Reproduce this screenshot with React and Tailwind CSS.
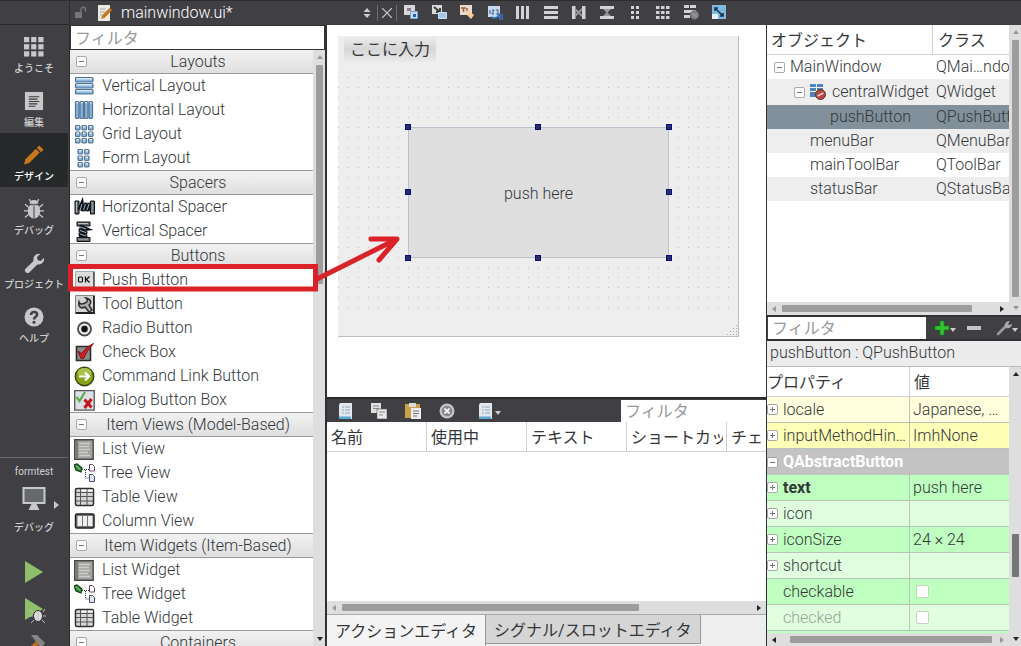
import { useState } from "react";
import clsx from "clsx";

/* ---------- small shared parts ---------- */

function Expander({ open = true, label }) {
  return (
    <button aria-label={label} className="block size-[11px] shrink-0 rounded-[2px] border border-[#a9a9a9] bg-white">
      <svg viewBox="0 0 9 9" className="block size-[9px]" stroke="#777" strokeWidth="1">
        <path d="M2 4.5h5" />
        {!open && <path d="M4.5 2v5" />}
      </svg>
    </button>
  );
}

function Triangle({ dir, dark }) {
  const points = {
    up: "1,6 4,2 7,6",
    down: "1,2 7,2 4,6",
    left: "6,1 2,4 6,7",
    right: "2,1 6,4 2,7",
  };
  return (
    <svg viewBox="0 0 8 8" className="size-2 shrink-0" fill={dark ? "#222" : "#999"}>
      <polygon points={points[dir]} />
    </svg>
  );
}

function ScrollY({ before, thumb, after, dark, upDark, downDark }) {
  return (
    <div className="flex w-3 shrink-0 flex-col items-center bg-[#dedede] py-[3px] pl-px">
      <Triangle dir="up" dark={upDark} />
      <div className="my-1 flex min-h-0 w-[7px] flex-1 flex-col">
        <div style={{ flexGrow: before }} />
        <div style={{ flexGrow: thumb }} className={dark ? "rounded-[1px] bg-[#767676]" : "rounded-[1px] bg-[#9d9d9d]"} />
        <div style={{ flexGrow: after }} />
      </div>
      <Triangle dir="down" dark={downDark} />
    </div>
  );
}

function ScrollX({ before = 0, thumb, after, leftDark, rightDark = true }) {
  return (
    <div className="flex h-[13px] shrink-0 items-center bg-[#dedede] px-[3px]">
      <Triangle dir="left" dark={leftDark} />
      <div className="mx-1 flex h-[7px] flex-1">
        <div style={{ flexGrow: before }} />
        <div style={{ flexGrow: thumb }} className="rounded-[1px] bg-[#9d9d9d]" />
        <div style={{ flexGrow: after }} />
      </div>
      <Triangle dir="right" dark={rightDark} />
    </div>
  );
}

/* ---------- widget box icons, all on a 21 x 21 grid ---------- */

function Tile({ x, y, w, h }) {
  return (
    <>
      <rect x={x + 0.5} y={y + 0.5} width={w} height={h} rx="1" fill="#86b4dc" stroke="#55728f" strokeWidth="1.2" />
      <path d={`M${x + 1.5} ${y + 1.8}h${w - 2}`} stroke="#dcf0fd" strokeWidth="1.4" />
    </>
  );
}

const widgetIcons = {
  vlayout: [1, 7, 13].map((y) => <Tile key={y} x={1} y={y} w={17.5} h={4.5} />),
  hlayout: [1, 5.5, 10, 14.5].map((x) => <Tile key={x} x={x} y={1} w={3.5} h={17} />),
  grid: [1, 7.5, 14].map((x) => [1, 7.5, 14].map((y) => <Tile key={x + "-" + y} x={x} y={y} w={4.5} h={4.5} />)),
  form: [3.5, 10].map((x) => [1, 7.5, 14].map((y) => <Tile key={x + "-" + y} x={x} y={y} w={4.5} h={4.5} />)),
  hspacer: (
    <>
      <path d="M1 4h4v13H1zM16.500 4h4v13h-4z" fill="#5f6a70" stroke="#111" />
      <path d="M5 13l3-7 1 8 3-8 1 8 3-8v8" fill="none" stroke="#12161d" strokeWidth="3.400" />
      <path d="M6 13l2-6M9.500 13l2-6M13 13l2-6" stroke="#9fb0c0" strokeWidth="1" />
      <path d="M2.500 5v10M18 5v10" stroke="#b5bfc4" />
    </>
  ),
  vspacer: (
    <>
      <path d="M3 1h13v4H3zM3 16.500h13v4H3z" fill="#5f6a70" stroke="#111" />
      <path d="M6 5l7 3-8 1 8 3-8 1 8 3H5" fill="none" stroke="#12161d" strokeWidth="3.400" />
      <path d="M6 6l6 2M6 9.500l6 2M6 13l6 2" stroke="#9fb0c0" strokeWidth="1" />
      <path d="M4 2.500h10M4 18h10" stroke="#b5bfc4" />
    </>
  ),
  push: (
    <>
      <path d="M1.5 1.5h18v16h-18z" fill="#dcdcdc" stroke="#aaa" />
      <path d="M1.5 18h18.500V1.500" fill="none" stroke="#444" strokeWidth="1.500" />
      <rect x="4.500" y="7" width="4" height="5" fill="none" stroke="#111" strokeWidth="1.200" rx="1" />
      <path d="M11.500 6.500v6M15.500 6.500l-3 3 3 3" fill="none" stroke="#111" strokeWidth="1.300" />
    </>
  ),
  tool: (
    <>
      <path d="M1.5 1.5h18v17h-18z" fill="#d3d3d3" stroke="#888" />
      <path d="M1.5 19h18.500V1.500" fill="none" stroke="#222" strokeWidth="1.800" />
      <path d="M5 8c1 3 4 2 6 1 3-1 3-3 1-5 5 1 6 5 3 7l3 5-3 2-4-5c-4 2-7 0-6-5z" fill="#aaa" stroke="#2c2c2c" strokeWidth="1.500" />
    </>
  ),
  radio: (
    <>
      <circle cx="10.500" cy="11" r="6.500" fill="#d0d0d0" stroke="#4c4c4c" strokeWidth="1.800" />
      <circle cx="10.500" cy="11" r="4.700" fill="none" stroke="#fff" />
      <circle cx="10.500" cy="11" r="3.200" fill="#111" />
    </>
  ),
  check: (
    <>
      <path d="M2.500 4.500h14v14h-14z" fill="#8b8b8b" stroke="#2c2c2c" strokeWidth="1.600" />
      <path d="M4 9l3.500 2.500Q13 4 19.500 1.500 13 8 9.500 16.500H7z" fill="#cf1f28" stroke="#7d1015" />
    </>
  ),
  command: (
    <>
      <circle cx="10.500" cy="10.500" r="9.200" fill="#86a31a" stroke="#39470d" strokeWidth="1.500" />
      <ellipse cx="10.500" cy="6.500" rx="7" ry="4.500" fill="#abc04a" />
      <path d="M5 10.500h10M11 6.500l4 4-4 4" fill="none" stroke="#fff" strokeWidth="2.200" />
    </>
  ),
  dialog: (
    <>
      <path d="M.7.7h19.500v19.500H.7z" fill="#dbdfe6" stroke="#555" strokeWidth="1.300" />
      <path d="M2.500 7l3 4L11 2" fill="none" stroke="#5faa48" strokeWidth="2.200" />
      <path d="M10.500 9.500l7 8M17.500 9l-7 9" stroke="#c0181c" strokeWidth="3" />
    </>
  ),
  list: (
    <>
      <path d="M.7.7h18.500v19.500H.7z" fill="#a2a39f" stroke="#484848" strokeWidth="1.400" />
      <path d="M3 1.500v18" stroke="#6c6c6c" strokeWidth="1.500" />
      <path d="M5 4.500h11M5 7.500h10M5 10.500h11M5 13.500h9M5 16.500h11" stroke="#cdcec9" strokeWidth="1.300" />
    </>
  ),
  tree: (
    <>
      <path d="M0 2l3-1 5 4-1 4-5-2z" fill="#2c8b3a" stroke="#123f19" strokeWidth="1.200" />
      <path d="M2 2.500l4 4" stroke="#a7e0ae" />
      <path d="M8 6.500h7M11.500 7v8h4" fill="none" stroke="#333" strokeDasharray="1 1" />
      <path d="M15.500 1.500h3l2 2v4.500h-5z" fill="#fff" stroke="#6c4a6e" />
      <path d="M15.500 11.500h3l2 2v5h-5z" fill="#dde6f5" stroke="#4a4f6e" />
    </>
  ),
  table: (
    <>
      <rect x="1.500" y="1.500" width="18" height="17" rx="1.500" fill="#d6d6d6" stroke="#2e2e2e" strokeWidth="1.500" />
      <path d="M2 5.500h17M2 9.500h17M2 14h17M6.500 2v16M13 2v16" stroke="#555" />
      <path d="M7.500 3.500h5M14 3.500h5" stroke="#fff" strokeWidth="1.500" />
    </>
  ),
  column: (
    <>
      <rect x="1.500" y="3" width="18.500" height="14" rx="1.500" fill="#777" stroke="#222" strokeWidth="1.500" />
      <path d="M3.500 5H8v10H3.500zM9 5h4v10H9zM14 5h4.500v10H14z" fill="#f0f0f0" />
    </>
  ),
};

const widgetGroups = [
  {
    title: "Layouts",
    items: [["Vertical Layout", "vlayout"], ["Horizontal Layout", "hlayout"], ["Grid Layout", "grid"], ["Form Layout", "form"]],
  },
  { title: "Spacers", items: [["Horizontal Spacer", "hspacer"], ["Vertical Spacer", "vspacer"]] },
  {
    title: "Buttons",
    items: [
      ["Push Button", "push"],
      ["Tool Button", "tool"],
      ["Radio Button", "radio"],
      ["Check Box", "check"],
      ["Command Link Button", "command"],
      ["Dialog Button Box", "dialog"],
    ],
  },
  {
    title: "Item Views (Model-Based)",
    items: [["List View", "list"], ["Tree View", "tree"], ["Table View", "table"], ["Column View", "column"]],
  },
  {
    title: "Item Widgets (Item-Based)",
    items: [["List Widget", "list"], ["Tree Widget", "tree"], ["Table Widget", "table"]],
  },
  { title: "Containers", items: [] },
];

function WidgetBox() {
  return (
    <aside className="flex w-[257px] shrink-0 flex-col border-r-2 border-[#2f3134] bg-white">
      <input
        aria-label="ウィジェットのフィルタ"
        placeholder="フィルタ"
        className="h-[25px] shrink-0 border border-[#333] px-1 pt-0.5 font-normal outline-none placeholder:text-[#999]"
      />
      <div className="flex min-h-0 flex-1">
        <div className="min-w-0 flex-1 overflow-hidden">
          {widgetGroups.map((group) => (
            <section key={group.title} className="border-t border-[#999] first:border-t-0">
              <h2 className="flex h-6 items-center border-b border-[#999] bg-linear-to-b from-[#f2f2f2] to-[#dfdfdf] pl-1.5">
                <Expander label={group.title} />
                <span className="flex-1 pr-1 text-center">{group.title}</span>
              </h2>
              <ul>
                {group.items.map(([name, icon]) => (
                  <li key={name} className="flex h-6 items-center gap-[7px] pl-1">
                    <svg viewBox="0 0 21 21" className="size-[21px] shrink-0">{widgetIcons[icon]}</svg>
                    <span>{name}</span>
                  </li>
                ))}
              </ul>
            </section>
          ))}
        </div>
        <ScrollY before={0} thumb={221} after={350} downDark />
      </div>
    </aside>
  );
}

/* ---------- mode selector on the far left ---------- */

const modeIcons = {
  welcome: [0, 7.5, 15].map((x) =>
    [0, 7.5, 15].map((y) => <rect key={x + "-" + y} x={x} y={y} width="5.500" height="5.500" />)
  ),
  edit: (
    <>
      <path d="M1 1h19v19H1z" />
      <path d="M5 6h11M5 8.500h9M5 11h11M5 13.500h9M5 16h7" stroke="#3a3a3d" strokeWidth="1.200" />
    </>
  ),
  design: (
    <>
      <path d="M0 20.500L1.500 15 12.500 4l4 4L5.500 19z" fill="#c8791c" />
      <path d="M13.500 3L16 .5 20.500 5 18 7.500z" fill="#c8791c" />
    </>
  ),
  debug: (
    <>
      <ellipse cx="10.500" cy="12.500" rx="6.500" ry="8" />
      <path d="M6 5a4.500 4 0 0 1 9 0z" />
      <path d="M7 3L5.500 0M14 3l1.500-3M5 9L1 5.500M16 9l4-3.500M5 12.500H0M16 12.500h5M5 16l-4 3.500M16 16l4 3.500" stroke="#c8c8c8" strokeWidth="1.300" />
      <path d="M5 6h11M10.500 7v13" stroke="#404044" strokeWidth="1" />
    </>
  ),
  project: <path d="M1 17l9-8.500C9 4 12.500 0 17 1l-3.500 3.500 1 3 3 1L21 5c1 4.500-3 8-7 7L5 21c-2 1-5-2-4-4z" />,
  help: (
    <>
      <circle cx="10.500" cy="10.500" r="10" />
      <path d="M7.300 8.500c0-4.500 6.500-4 6.500-.5 0 2-3.300 2.500-3.300 5" fill="none" stroke="#404044" strokeWidth="2.600" />
      <circle cx="10.500" cy="16" r="1.600" fill="#404044" />
    </>
  ),
};

const modes = [
  ["ようこそ", "welcome"],
  ["編集", "edit"],
  ["デザイン", "design"],
  ["デバッグ", "debug"],
  ["プロジェクト", "project"],
  ["ヘルプ", "help"],
];

function ModeBar() {
  const [mode, setMode] = useState("design");
  return (
    <nav className="flex w-[70px] shrink-0 flex-col overflow-hidden border-r border-[#2c2c2f] bg-[#404044] pr-px text-[10px] font-medium text-[#d0d0d0]">
      <div className="h-[25px] shrink-0 border-t border-b border-t-[#2c2c2f] border-b-[#28282a]" />
      {modes.map(([label, id]) => (
        <button
          key={id}
          onClick={() => setMode(id)}
          className={clsx("flex h-[54px] shrink-0 flex-col items-center gap-1 pt-3", mode === id && "bg-[#262a2b] text-white")}
        >
          <svg viewBox="0 0 21 21" className="size-5" fill="#c8c8c8">{modeIcons[id]}</svg>
          <span className="leading-4 whitespace-nowrap">{label}</span>
        </button>
      ))}
      <div className="flex-1" />
      <div className="flex h-[189px] shrink-0 flex-col items-center border-t border-[#6a6a6d] pt-1.5">
        <span className="leading-4 font-normal">formtest</span>
        <button className="mt-1.5 flex w-full flex-col items-center gap-2" aria-label="キットの選択: デバッグ">
          <span className="flex items-center gap-2 pl-3">
            <svg viewBox="0 0 24 26" className="h-[26px] w-6">
              <path d="M.5 1h23v17H.5z" fill="#c8c8c8" />
              <path d="M2.500 3h19v13h-19z" fill="#66696b" />
              <path d="M9.500 18h5l3 6h-11z" fill="#c8c8c8" />
            </svg>
            <svg viewBox="0 0 5 8" className="mt-3 h-2 w-[5px]" fill="#c8c8c8"><path d="M0 0l5 4-5 4z" /></svg>
          </span>
          <span className="leading-4">デバッグ</span>
        </button>
        <button aria-label="実行" className="mt-6">
          <svg viewBox="0 0 22 24" className="h-6 w-[22px]" fill="#8fbf6b"><path d="M2 1l18 11L2 23z" /></svg>
        </button>
        <button aria-label="デバッグ開始" className="mt-3">
          <svg viewBox="0 0 24 28" className="h-7 w-6">
            <path d="M3 2l18 11L3 24z" fill="#8fbf6b" />
            <ellipse cx="16" cy="20" rx="4.500" ry="5.500" fill="#ddd" stroke="#333" />
            <path d="M11 16l-3-3M21 16l2-3M11 20H7M21 20h3M12 24l-3 3M20 24l3 3M16 15v10" stroke="#bbb" />
          </svg>
        </button>
        <button aria-label="ビルド" className="mt-2.5">
          <svg viewBox="0 0 24 24" className="size-6">
            <path d="M9 1h6l8 8-4 5z" fill="#858585" />
            <path d="M14 7l3 3-12 12-3-3z" fill="#b96a21" />
          </svg>
        </button>
      </div>
    </nav>
  );
}

/* ---------- editor toolbar ---------- */

const W = "#d2d2d2";

const toolIcons = [
  ["ウィジェットを編集", <><path d="M1 0h11v10H1z" fill="#d8d8dc" /><path d="M4 3h4v3H4z" fill="#8a7c80" /><path d="M7.500 6.500h7v7h-7z" fill="#c2dcf8" stroke="#7ba3d6" /><path d="M10 9h3v3h-3z" fill="#2e62a8" /></>],
  ["シグナル/スロットを編集", <><path d="M1 0h10v9H1z" fill="#d5dad5" /><path d="M3 2l6 5M9 3v4H5" fill="none" stroke="#2f3b33" strokeWidth="1.800" /><path d="M7.500 7.500h8v6h-8z" fill="#a8c6ea" stroke="#cfe0f5" /></>],
  ["buddy を編集", <><path d="M1 0h12v10H1z" fill="#e3dcd6" /><path d="M2 3h5M4.500 3v4M8 3v3" stroke="#a85e2c" strokeWidth="1.500" /><path d="M9 5l6 5-3 4-5-5z" fill="#f7cf97" /></>],
  ["タブ順序を編集", <><path d="M1 1h12v11H1z" fill="#c9d9ee" /><path d="M3 5v4M5 5h2l-2 4h2M9 5h2v4H9" fill="none" stroke="#345b94" /><path d="M4 12c4 2 7 1 8-3M13 8v7M15.500 9v6" fill="none" stroke="#3b6fb9" strokeWidth="1.800" /></>],
  ["水平に並べる", <path d="M1 1h3v13H1zM6 1h3v13H6zM11 1h3v13h-3z" fill={W} />],
  ["垂直に並べる", <path d="M1 1h14v3H1zM1 6h14v3H1zM1 11h14v3H1z" fill={W} />],
  ["スプリッタで水平に並べる", <><path d="M1 1h3.500v13H1zM11 1h3.500v13H11z" fill={W} /><path d="M4 4l7 7M11 4l-7 7" stroke="#999" strokeWidth="1.800" /></>],
  ["スプリッタで垂直に並べる", <><path d="M1 1h14v3H1zM1 11h14v3H1z" fill={W} /><path d="M4 4h8L8.500 7.500 12 11H4l3.500-3.500z" fill="#999" /></>],
  ["フォームレイアウトで並べる", <path d="M4 1h3v3H4zM9 1h3v3H9zM4 6h3v3H4zM9 6h3v3H9zM4 11h3v3H4zM9 11h3v3H9z" fill={W} />],
  ["格子状に並べる", <path d="M1 1h3.500v3H1zM6 1h3.500v3H6zM11 1h3.500v3H11zM1 6h3.500v3H1zM6 6h3.500v3H6zM11 6h3.500v3H11zM1 11h3.500v3H1zM6 11h3.500v3H6zM11 11h3.500v3H11z" fill={W} />],
  ["レイアウトを解除", <><path d="M1 0h5v3H1zM7 0h6v3H7zM1 5h12v3H1zM1 10h6v3H1z" fill={W} /><circle cx="11.500" cy="10" r="4.200" fill="#858585" stroke="#6a6a6a" /><path d="M9.500 8l4 4" stroke="#aaa" /></>],
  ["サイズを調整", <><path d="M1 0h14v14H1z" fill="#7fb9df" /><path d="M1 9h6v5H1z" fill="#e8f2fa" /><path d="M4 3l8 8M4 6V3h3M12 8v3H9" fill="none" stroke="#16324f" strokeWidth="1.600" /></>],
];

function TopBar() {
  return (
    <header className="flex h-[25px] shrink-0 items-center border-t border-[#2c2c2f] bg-[#404044] text-[#d8d8d8]">
      <div className="flex h-full w-[307px] items-center pr-1.5 pl-1">
        <svg viewBox="0 0 14 14" className="size-[14px]">
          <path d="M1 6h7v6H1z" fill="#77777a" />
          <path d="M7 6V3.500a2 2 0 0 1 4.500 0V6" fill="none" stroke="#77777a" strokeWidth="1.400" />
        </svg>
        <svg viewBox="0 0 16 16" className="ml-2 size-4">
          <path d="M2 0h12v16H2z" fill="#ece9e2" />
          <path d="M4 4h6M4 7h6M4 10h5" stroke="#aaa" />
          <path d="M5 14l1.500-4 7-7 2.500 2-7.500 8z" fill="#c8761c" />
        </svg>
        <select aria-label="開いているドキュメント" className="ml-[9px] flex-1 appearance-none bg-transparent font-light text-white outline-none">
          <option>mainwindow.ui*</option>
        </select>
        <svg viewBox="0 0 8 12" className="h-3 w-2" fill="#ccc"><path d="M4 1l3.500 4h-7zM4 11L.5 7h7z" /></svg>
      </div>
      <button aria-label="閉じる" className="flex h-4 w-5 items-center justify-center border-x border-[#6c6c70]">
        <svg viewBox="0 0 10 10" className="size-[10px]" stroke="#ccc" strokeWidth="1.200"><path d="M0 0l10 10M10 0L0 10" /></svg>
      </button>
      <div className="flex items-center gap-3 pl-1.5">
        {toolIcons.map(([label, icon]) => (
          <button key={label} title={label} aria-label={label} className="shrink-0">
            <svg viewBox="0 0 16 16" className="block size-4">{icon}</svg>
          </button>
        ))}
      </div>
    </header>
  );
}

/* ---------- form editor ---------- */

const handles = [
  "-left-[3px] -top-[3px]",
  "left-[127px] -top-[3px]",
  "-right-[3px] -top-[3px]",
  "-left-[3px] top-[62px]",
  "-right-[3px] top-[62px]",
  "-left-[3px] -bottom-[3px]",
  "left-[127px] -bottom-[3px]",
  "-right-[3px] -bottom-[3px]",
];

function FormCanvas() {
  return (
    <div className="min-h-0 flex-1 overflow-hidden bg-white pt-[11px] pl-[11px]">
      <div className="relative flex h-[301px] w-[401px] flex-col border-r border-b border-[#bdbdbd] bg-[#eee]">
        <div className="h-[41px] pl-1.5">
          <button className="h-[26px] bg-linear-to-b from-[#eee] via-[#d6d6d6] to-[#eaeaea] px-1.5 pt-0.5 leading-6 font-normal">ここに入力</button>
        </div>
        <div className="h-[231px] bg-[conic-gradient(from_270deg_at_1px_1px,#bdbdbd_90deg,transparent_0)] bg-[size:10px_10px]" />
        <svg viewBox="0 0 12 12" className="absolute right-0 bottom-0 size-3" fill="#aaa">
          <path d="M10 1h1v1h-1zM7 4h1v1H7zM10 4h1v1h-1zM4 7h1v1H4zM7 7h1v1H7zM10 7h1v1h-1zM1 10h1v1H1zM4 10h1v1H4zM7 10h1v1H7zM10 10h1v1h-1z" />
        </svg>
        <div className="absolute top-[91px] left-[70px] h-[131px] w-[261px]">
          <button className="size-full border border-[#c0c0cc] bg-[#dfdfdf] pt-0.5">push here</button>
          {handles.map((place) => (
            <span key={place} className={clsx("absolute size-[6px] border border-[#0b0b80] bg-[#2b2f63]", place)} />
          ))}
        </div>
      </div>
    </div>
  );
}

/* ---------- action editor ---------- */

const page = (
  <>
    <path d="M3 0h12v16H2V2z" fill="#e3e8ec" />
    <path d="M5 4h2M8 4h5M5 7h2M8 7h5M5 10h2M8 10h5" stroke="#8fa3bd" strokeWidth="1.200" />
    <path d="M2 13.500h12V16H2z" fill="#58a9cf" />
  </>
);

const actionIcons = [
  ["新規", page],
  ["コピー", <><path d="M0 0h10v10H0z" fill="#e0e0e0" /><path d="M2 3h6M2 5.500h6" stroke="#888" /><path d="M6 6h10v10H6z" fill="#e8e8e8" stroke="#555" strokeWidth=".6" /><path d="M8 9h6M8 12h4" stroke="#888" /></>],
  ["貼り付け", <><path d="M0 1h15v14H0z" fill="#c9a24a" /><path d="M4 0h7v4H4z" fill="#ddd" /><path d="M6 5h10v11H6z" fill="#eee" /><path d="M8 8h6M8 10.500h6M8 13h4" stroke="#777" /></>],
  ["削除", <><circle cx="8" cy="8" r="7.500" fill="#c4c4c4" /><circle cx="8" cy="8" r="5.200" fill="#858585" /><path d="M5.500 5.500l5 5M10.500 5.500l-5 5" stroke="#eee" strokeWidth="2" /></>],
];

const actionColumns = ["名前", "使用中", "テキスト", "ショートカット", "チェック可能"];

function ActionEditor() {
  const [tab, setTab] = useState(0);
  return (
    <section className="flex h-[249px] shrink-0 flex-col bg-white">
      <div className="flex h-[25px] shrink-0 items-center border-t-2 border-[#2a2c2e] bg-[#404044]">
        <div className="flex flex-1 items-center gap-[18px] pl-2.5">
          {actionIcons.map(([label, icon]) => (
            <button key={label} aria-label={label}><svg viewBox="0 0 16 16" className="block size-4">{icon}</svg></button>
          ))}
          <button aria-label="表示設定" className="ml-1 flex items-end gap-0.5">
            <svg viewBox="0 0 16 16" className="block size-4">{page}</svg>
            <svg viewBox="0 0 6 4" className="mb-1 h-1 w-1.5" fill="#ccc"><path d="M0 0h6L3 4z" /></svg>
          </button>
        </div>
        <input
          aria-label="アクションのフィルタ"
          placeholder="フィルタ"
          className="h-[22px] w-[145px] bg-white px-1 pt-0.5 font-normal outline-none placeholder:text-[#999]"
        />
      </div>
      <div className="min-h-0 flex-1 overflow-hidden">
        <table className="w-full table-fixed border-separate border-spacing-0">
          <thead>
            <tr className="h-[30px]">
              {actionColumns.map((name) => (
                <th key={name} className="w-[100px] border-r border-b border-[#d0d0d0] p-0 pt-0.5 pr-[3px] pl-1 text-left font-normal last:w-auto last:border-r-0">
                  <span className="block overflow-hidden whitespace-nowrap">{name}</span>
                </th>
              ))}
            </tr>
          </thead>
        </table>
      </div>
      <ScrollX thumb={297} after={112} />
      <div className="flex h-8 shrink-0 items-start border-t border-[#aaa] bg-[#eee]" role="tablist">
        {["アクションエディタ", "シグナル/スロットエディタ"].map((name, i) => (
          <button
            key={name}
            role="tab"
            aria-selected={tab === i}
            onClick={() => setTab(i)}
            className={clsx(
              "border-r border-[#999] px-2 font-normal whitespace-nowrap",
              tab === i ? "h-full bg-[#f4f4f4] pt-0.5" : "h-[29px] border-b bg-[#d5d5d5] pt-1"
            )}
          >
            {name}
          </button>
        ))}
      </div>
    </section>
  );
}

/* ---------- object tree ---------- */

const objects = [
  { name: "MainWindow", cls: "QMai…ndow", open: true, pad: "pl-[7px]" },
  { name: "centralWidget", cls: "QWidget", open: true, icon: true, pad: "pl-[27px]" },
  { name: "pushButton", cls: "QPushButton", pad: "pl-[63px]", selected: true },
  { name: "menuBar", cls: "QMenuBar", pad: "pl-[43px]" },
  { name: "mainToolBar", cls: "QToolBar", pad: "pl-[43px]" },
  { name: "statusBar", cls: "QStatusBar", pad: "pl-[43px]" },
];

function ObjectTree() {
  return (
    <section className="flex h-[290px] shrink-0 bg-white">
      <div className="flex min-w-0 flex-1 flex-col">
        <div className="min-h-0 flex-1 overflow-hidden">
          <table className="w-full table-fixed border-separate border-spacing-0 whitespace-nowrap">
            <thead>
              <tr className="h-[30px] text-left">
                <th className="w-[166px] border-r border-b border-[#d0d0d0] p-0 pt-0.5 pl-1 font-normal">オブジェクト</th>
                <th className="border-b border-[#d0d0d0] p-0 pt-0.5 pl-[5px] font-normal">クラス</th>
              </tr>
            </thead>
            <tbody>
              {objects.map((o) => (
                <tr key={o.name} className={o.selected ? "bg-[#81909a]" : "even:bg-[#eee]"}>
                  <td className={clsx("p-0", o.icon ? "h-[26px]" : "h-6", o.pad)}>
                    <span className="flex items-center gap-[5px]">
                      {o.open && <Expander label={o.name} />}
                      {o.icon && (
                        <svg viewBox="0 0 16 16" className="mr-px size-4 shrink-0">
                          <path d="M0 0h6v3H0zM7 0h6v3H7zM0 4h6v3H0zM7 4h6v3H7zM0 8h6v5H0z" fill="#4f84bd" />
                          <circle cx="10.500" cy="10.500" r="5" fill="#b04a46" stroke="#6a2c2a" />
                          <path d="M7.500 12l6-3" stroke="#e6c9c7" strokeWidth="1.500" />
                        </svg>
                      )}
                      {o.name}
                    </span>
                  </td>
                  <td className="p-0 pl-[3px]">
                    <span className="block overflow-hidden">{o.cls}</span>
                  </td>
                </tr>
              ))}
            </tbody>
          </table>
        </div>
        <ScrollX thumb={193} after={22} />
      </div>
      <ScrollY before={0} thumb={247} after={3} />
    </section>
  );
}

/* ---------- property editor ---------- */

const properties = [
  { name: "locale", value: "Japanese, …", expand: true, bg: "bg-[#ffffde]" },
  { name: "inputMethodHin…", value: "ImhNone", expand: true, bg: "bg-[#ffffb8]" },
  { group: "QAbstractButton" },
  { name: "text", value: "push here", expand: true, bold: true, bg: "bg-[#bfffbf]" },
  { name: "icon", value: "", expand: true, bg: "bg-[#dfffdf]" },
  { name: "iconSize", value: "24 × 24", expand: true, bg: "bg-[#bfffbf]" },
  { name: "shortcut", value: "", expand: true, bg: "bg-[#dfffdf]" },
  { name: "checkable", check: true, bg: "bg-[#bfffbf]" },
  { name: "checked", check: true, disabled: true, bg: "bg-[#dfffdf]" },
];

function PropertyRow({ p }) {
  if (p.group) {
    return (
      <tr className="h-[26px] bg-[#c3c3c3] text-white">
        <th colSpan={2} className="p-0 text-left font-bold">
          <span className="flex items-center gap-[5px]"><Expander label={p.group} />{p.group}</span>
        </th>
      </tr>
    );
  }
  return (
    <tr className={clsx("h-[26px]", p.bg, p.disabled && "text-[#9aa39a]")}>
      <th className={clsx("border-r border-b border-[#b9c4b9] p-0 text-left", p.bold ? "font-bold" : "font-light")}>
        <span className="flex items-center gap-[5px]">
          {p.expand ? <Expander open={false} label={p.name} /> : <span className="w-[11px]" />}
          {p.name}
        </span>
      </th>
      <td className="border-b border-[#b9c4b9] p-0 pl-[3px]">
        {p.check ? (
          <input
            type="checkbox"
            aria-label={p.name}
            disabled={p.disabled}
            className="ml-[3px] block size-[13px] appearance-none rounded-[2px] border border-[#c5d2c5] bg-white"
          />
        ) : (
          p.value
        )}
      </td>
    </tr>
  );
}

function PropertyEditor() {
  return (
    <section className="flex min-h-0 flex-1 flex-col bg-white">
      <div className="flex h-[26px] shrink-0 items-center border-y-2 border-[#2f3134] bg-[#404044]">
        <input
          aria-label="プロパティのフィルタ"
          placeholder="フィルタ"
          className="ml-px h-[22px] w-[158px] bg-white px-1 pt-0.5 font-normal outline-none placeholder:text-[#999]"
        />
        <button aria-label="追加" className="ml-2 flex items-end">
          <svg viewBox="0 0 16 16" className="size-4"><path d="M6 1h4v5h5v4h-5v5H6v-5H1V6h5z" fill="#2fc32f" stroke="#0f7d14" strokeWidth=".6" /></svg>
          <svg viewBox="0 0 6 4" className="mb-1 h-1 w-1.5" fill="#ccc"><path d="M0 0h6L3 4z" /></svg>
        </button>
        <button aria-label="削除" className="ml-2.5">
          <svg viewBox="0 0 16 16" className="size-4"><path d="M1 6h14v4H1z" fill="#c6c6c6" /></svg>
        </button>
        <button aria-label="設定" className="ml-3.5 flex items-end">
          <svg viewBox="0 0 16 16" className="size-4">
            <path d="M2 14l8-8" stroke="#999" strokeWidth="2.600" strokeLinecap="round" />
            <path d="M9 7c-1-3 1-6 5-6l-2 3 1 1 3-1c0 3-3 5-6 4z" fill="#aaa" />
          </svg>
          <svg viewBox="0 0 6 4" className="mb-1 h-1 w-1.5" fill="#ccc"><path d="M0 0h6L3 4z" /></svg>
        </button>
      </div>
      <div className="h-[26px] shrink-0 border-b border-[#bbb] bg-[#ececec] px-[3px]">pushButton : QPushButton</div>
      <div className="flex min-h-0 flex-1">
        <div className="flex min-w-0 flex-1 flex-col">
          <div className="min-h-0 flex-1 overflow-hidden bg-[#bfffbf]">
            <table className="w-full table-fixed border-separate border-spacing-0 bg-white whitespace-nowrap">
              <thead>
                <tr className="h-[30px] text-left">
                  <th className="w-[143px] border-r border-b border-[#d0d0d0] p-0 pt-0.5 font-normal">プロパティ</th>
                  <th className="border-b border-[#d0d0d0] p-0 pt-0.5 pl-1 font-normal">値</th>
                </tr>
              </thead>
              <tbody>
                {properties.map((p) => <PropertyRow key={p.name || p.group} p={p} />)}
              </tbody>
            </table>
          </div>
          <ScrollX before={8} thumb={205} after={2} leftDark rightDark={false} />
        </div>
        <ScrollY before={152} thumb={43} after={54} dark upDark downDark />
      </div>
    </section>
  );
}

/* Red frame round "Push Button" and the arrow to the form */
function Annotation() {
  return (
    <svg viewBox="0 0 336 60" className="pointer-events-none absolute top-[233px] left-[68px] h-[60px] w-[336px]" fill="none" stroke="#dc2229">
      <rect x="2.500" y="33.500" width="245" height="22.500" strokeWidth="5" />
      <path d="M249 46L329 6" strokeWidth="5" />
      <path d="M303 6h26l-18 21" strokeWidth="5" strokeLinecap="round" strokeLinejoin="round" />
    </svg>
  );
}

export default function App() {
  return (
    <div className="relative flex h-screen overflow-hidden bg-[#404044] font-['Roboto','Noto_Sans_CJK_JP',sans-serif] text-base leading-6 font-light text-[#33373a]">
      <ModeBar />
      <div className="flex min-w-0 flex-1 flex-col">
        <TopBar />
        <div className="flex min-h-0 flex-1">
          <WidgetBox />
          <main className="flex min-w-0 flex-1 flex-col">
            <FormCanvas />
            <ActionEditor />
          </main>
          <aside className="flex w-[255px] shrink-0 flex-col border-l border-[#2f3134]">
            <ObjectTree />
            <PropertyEditor />
          </aside>
        </div>
      </div>
      <Annotation />
    </div>
  );
}
